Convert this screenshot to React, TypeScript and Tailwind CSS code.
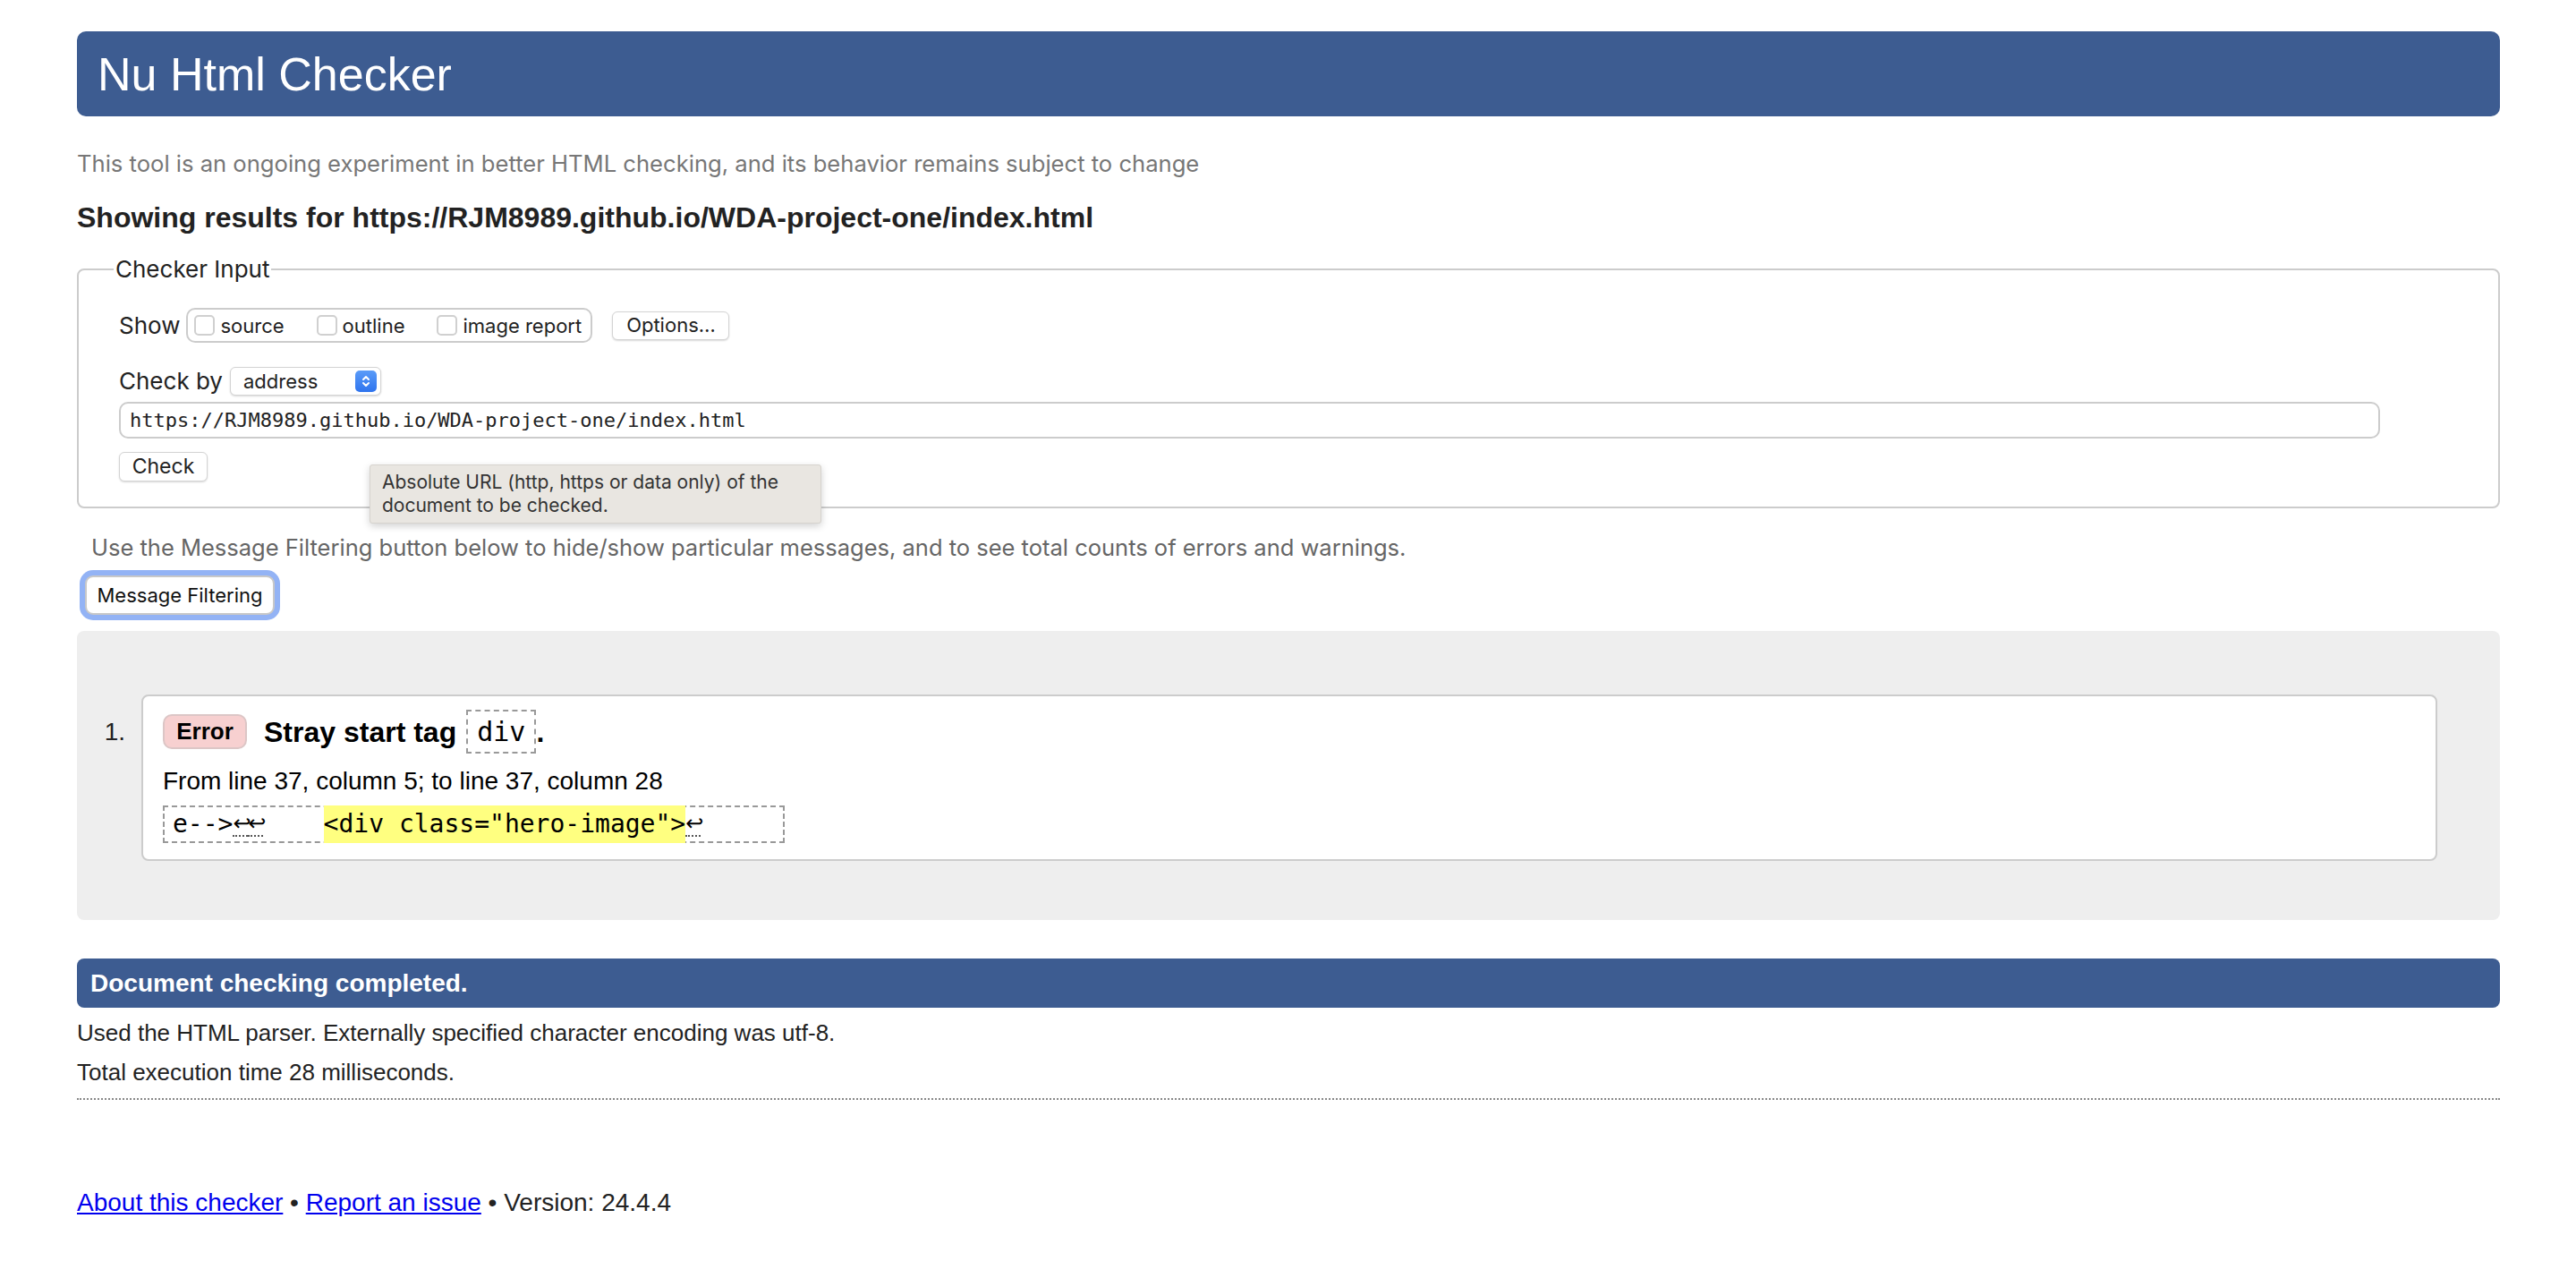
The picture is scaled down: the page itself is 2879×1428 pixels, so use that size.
import React from 'react';

const inter = "font-['Inter','Liberation_Sans',sans-serif]";
const mono = "font-['DejaVu_Sans_Mono','Liberation_Mono',monospace]";

function Checkbox({ label }: { label: string }) {
  return (
    <label className="flex items-center gap-[6px]">
      <span className="block h-[23px] w-[23px] rounded-[5px] border-2 border-[#d0d0d0] bg-white" />
      <span className="text-[22px] leading-none">{label}</span>
    </label>
  );
}

function ReturnMark() {
  return (
    <span className="inline-block w-[16.86px] overflow-visible border-b-2 border-dotted border-[#555] text-center font-['DejaVu_Sans',sans-serif] text-[24px] leading-[26px]">
      ↩
    </span>
  );
}

export default function App() {
  return (
    <div className="min-h-screen w-full bg-white pb-[60px] pl-[86px] pr-[85px] pt-[35px] font-['Liberation_Sans',Arial,sans-serif] text-[#222]">
      <header className="flex h-[95px] items-center rounded-[10px] bg-[#3d5c91] pl-[23px]">
        <h1 className="text-[52px] leading-none text-white">Nu Html Checker</h1>
      </header>

      <p className={`${inter} mt-[38px] text-[25.6px] leading-[30px] text-[#777]`}>
        This tool is an ongoing experiment in better HTML checking, and its behavior remains subject to change
      </p>

      <h2 className="mt-[27px] text-[32px] font-bold leading-[36px] text-[#222]">
        Showing results for https://RJM8989.github.io/WDA-project-one/index.html
      </h2>

      <fieldset className={`${inter} mt-[25px] rounded-[8px] border-2 border-[#ccc] px-[45px] pb-[28px]`}>
        <legend className="-ml-[6px] px-[2px] text-[26px] leading-[30px]">Checker Input</legend>

        <div className="mt-[28px] flex h-[39px] items-center">
          <span className="text-[26px] leading-none">Show</span>
          <div className="ml-[7px] flex h-[39px] w-[454px] items-center gap-[36px] rounded-[10px] border-2 border-[#ccc] pl-[7px]">
            <Checkbox label="source" />
            <Checkbox label="outline" />
            <Checkbox label="image report" />
          </div>
          <button className="ml-[22px] flex h-[32px] w-[131px] items-center justify-center rounded-[6px] border border-[#d4d4d4] bg-white text-[22px] shadow-[0_1px_2px_rgba(0,0,0,0.15)]">
            Options…
          </button>
        </div>

        <div className="mt-[27px] flex h-[32px] items-center">
          <span className="text-[26px] leading-none">Check by</span>
          <div className="ml-[8px] flex h-[32px] w-[169px] items-center justify-between rounded-[6px] border border-[#d4d4d4] bg-white pl-[14px] pr-[4px] shadow-[0_1px_2px_rgba(0,0,0,0.15)]">
            <span className="text-[22px] leading-none">address</span>
            <span className="flex h-[24px] w-[24px] items-center justify-center rounded-[5px] bg-gradient-to-b from-[#5a9bf8] to-[#2f74ee]">
              <svg width="12" height="16" viewBox="0 0 12 16" fill="none" stroke="white" strokeWidth="2" strokeLinecap="round" strokeLinejoin="round">
                <path d="M3 6l3-3 3 3" />
                <path d="M3 10l3 3 3-3" />
              </svg>
            </span>
          </div>
        </div>

        <div className={`${mono} mt-[7px] flex h-[41px] w-[2527px] items-center rounded-[10px] border-2 border-[#ccc] bg-white pl-[10px] text-[22px]`}>
          https://RJM8989.github.io/WDA-project-one/index.html
        </div>

        <div className="relative mt-[15px] h-[33px]">
          <button className="flex h-[33px] w-[99px] items-center justify-center rounded-[6px] border border-[#d4d4d4] bg-white text-[23px] shadow-[0_1px_2px_rgba(0,0,0,0.15)]">
            Check
          </button>
          <div className="absolute left-[280px] top-[14px] w-[505px] rounded-[3px] border border-[#d6d3ce] bg-[#e9e6e1] py-[6px] pl-[13px] text-[21px] leading-[26px] text-[#333] shadow-[0_3px_8px_rgba(0,0,0,0.18)]">
            Absolute URL (http, https or data only) of the
            <br />
            document to be checked.
          </div>
        </div>
      </fieldset>

      <p className={`${inter} mt-[28px] pl-[16px] text-[25.5px] leading-[32px] text-[#666]`}>
        Use the Message Filtering button below to hide/show particular messages, and to see total counts of errors and warnings.
      </p>
      <button
        className={`${inter} ml-[9px] mt-[15px] flex h-[44px] w-[212px] items-center justify-center rounded-[9px] border-2 border-[#c8c8c8] bg-white text-[22px] text-[#111] shadow-[0_0_0_6px_#93b3f5]`}
      >
        Message Filtering
      </button>

      <div className="mt-[18px] flex rounded-[8px] bg-[#eee] pb-[66px] pr-[70px] pt-[71px]">
        <div className="mt-[17px] flex h-[49px] w-[72px] items-center justify-end pr-[18px] text-[28px]">1.</div>
        <div className="flex-1 rounded-[8px] border-2 border-[#ccc] bg-white pb-[18px] pl-[22px] pt-[15px] text-black">
          <div className="flex h-[49px] items-center">
            <span className="flex h-[39px] w-[94px] items-center justify-center rounded-[10px] border-2 border-[#dcc6c6] bg-[#f7d0d0] text-[26px] font-bold">
              Error
            </span>
            <span className="ml-[19px] text-[32px] font-bold">Stray start tag</span>
            <span className={`${mono} ml-[11px] flex h-[49px] items-center border-2 border-dashed border-[#999] px-[10px] text-[30px]`}>
              div
            </span>
            <span className="text-[32px] font-bold">.</span>
          </div>
          <p className="mt-[15px] text-[28px] leading-[32px]">From line 37, column 5; to line 37, column 28</p>
          <div className={`${mono} mt-[11px] inline-flex h-[42px] items-center whitespace-pre border-2 border-dashed border-[#999] pl-[9px] pr-[92px] text-[28px]`}>
            <span>e--&gt;</span>
            <ReturnMark />
            <ReturnMark />
            <span>{'    '}</span>
            <span className="bg-[#ffff80]">&lt;div class="hero-image"&gt;</span>
            <ReturnMark />
          </div>
        </div>
      </div>

      <div className="mt-[43px] flex h-[55px] items-center rounded-[8px] bg-[#3d5c91] pl-[15px] text-[28px] font-bold text-white">
        Document checking completed.
      </div>
      <p className="mt-[13px] text-[26px] leading-[30px]">Used the HTML parser. Externally specified character encoding was utf-8.</p>
      <p className="mt-[14px] text-[26px] leading-[30px]">Total execution time 28 milliseconds.</p>
      <div className="mt-[14px] border-b-2 border-dotted border-[#888]" />

      <p className="mt-[99px] text-[28px] leading-[32px]">
        <a href="#" className="text-[#0000ee] underline">About this checker</a>
        {' • '}
        <a href="#" className="text-[#0000ee] underline">Report an issue</a>
        {' • Version: 24.4.4'}
      </p>
    </div>
  );
}
